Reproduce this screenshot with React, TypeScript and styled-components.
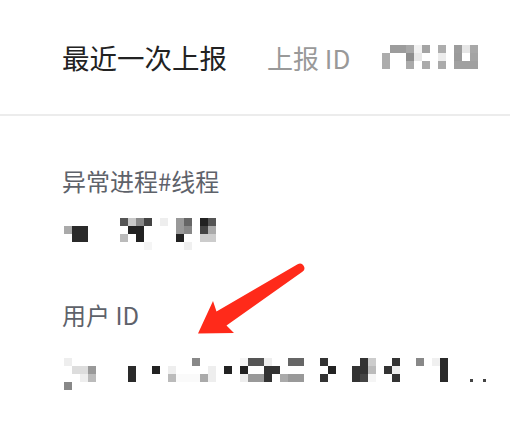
import styled, { createGlobalStyle } from 'styled-components';

const GlobalStyle = createGlobalStyle`
  html, body {
    margin: 0;
    padding: 0;
    background: #fff;
  }
  body {
    font-family: "Noto Sans CJK SC", "Noto Sans", sans-serif;
  }
`;

// Each mosaic is a list of rows; a row maps column index -> grey shade.
type Cells = Record<number, string>[];

const reportId: Cells = [
  { 1: '#9c9c9c', 2: '#9c9c9c', 3: '#a8a8a8', 4: '#f2f2f2', 5: '#a4a4a4', 7: '#adadad', 9: '#9c9c9c', 10: '#e6e6e6', 11: '#a8a8a8' },
  { 0: '#acacac', 3: '#8e8e8e', 4: '#e8e8e8', 7: '#ececec', 9: '#9a9a9a', 11: '#a4a4a4' },
  { 0: '#acacac', 3: '#aaaaaa', 5: '#aaaaaa', 7: '#aaaaaa', 9: '#a0a0a0', 10: '#a0a0a0', 11: '#a0a0a0' },
];

const threadId: Cells = [
  { 7: '#555', 8: '#c8c8c8', 9: '#888', 10: '#444', 12: '#eee', 14: '#999', 15: '#666', 17: '#222', 18: '#555' },
  { 0: '#aaa', 1: '#2a2a2a', 2: '#2a2a2a', 8: '#222', 9: '#222', 14: '#999', 15: '#888', 17: '#444', 18: '#aaa' },
  { 1: '#2a2a2a', 2: '#2a2a2a', 7: '#bbb', 9: '#222', 14: '#222', 17: '#ccc', 18: '#ccc' },
  { 10: '#f5f5f5', 15: '#f0f0f0' },
];

const userId: Cells = [
  { 0: '#eee', 16: '#888', 22: '#f5f5f5', 23: '#555', 24: '#555', 25: '#eee', 28: '#666', 29: '#666', 32: '#333', 37: '#333', 38: '#ccc', 41: '#333', 44: '#888', 46: '#f0f0f0', 47: '#2a2a2a' },
  { 1: '#ddd', 2: '#ddd', 3: '#999', 8: '#2a2a2a', 11: '#222', 13: '#eee', 18: '#eee', 20: '#222', 22: '#222', 25: '#333', 26: '#333', 33: '#222', 36: '#333', 37: '#333', 38: '#bbb', 40: '#333', 41: '#eee', 47: '#2a2a2a' },
  { 2: '#eee', 3: '#bbb', 8: '#2a2a2a', 13: '#bbb', 14: '#fafafa', 15: '#fafafa', 16: '#fafafa', 17: '#aaa', 18: '#eee', 22: '#eee', 23: '#999', 24: '#999', 25: '#333', 27: '#aaa', 28: '#999', 29: '#999', 32: '#333', 36: '#333', 37: '#444', 38: '#f5f5f5', 41: '#333', 47: '#2a2a2a' },
  { 0: '#888' },
];

const Page = styled.div`
  position: relative;
  width: 510px;
  height: 436px;
  overflow: hidden;
  background: #fff;
`;

const Header = styled.header`
  height: 116px;
  box-sizing: border-box;
  padding: 0 0 0 62px;
  display: flex;
  align-items: center;
  border-bottom: 2px solid #ececec;
`;

const Title = styled.h1`
  margin: 0 40px 0 0;
  font-size: 27.5px;
  font-weight: 400;
  line-height: 36px;
  color: #222;
`;

const IdLabel = styled.span`
  margin-right: 32px;
  font-size: 26px;
  line-height: 36px;
  color: #999;
  padding-top: 2px;
`;

const Body = styled.section`
  padding: 47px 0 0 62px;
  display: flex;
  flex-direction: column;
  gap: 47px;
`;

const Field = styled.div`
  display: flex;
  flex-direction: column;
`;

const Label = styled.div`
  font-size: 24px;
  line-height: 36px;
  color: #5e626a;
`;

const Grid = styled.div<{ $cols: number; $top: number; $left: number }>`
  display: grid;
  grid-template-columns: repeat(${(p) => p.$cols}, 8px);
  grid-auto-rows: 8px;
  margin-top: ${(p) => p.$top}px;
  margin-left: ${(p) => p.$left}px;
`;

const Cell = styled.span<{ $shade?: string }>`
  background: ${(p) => p.$shade ?? 'transparent'};
`;

const ValueRow = styled.div`
  position: relative;
  align-self: flex-start;
`;

const Dots = styled.span`
  position: absolute;
  left: calc(100% + 22px);
  top: 46px;
  display: flex;
  gap: 10px;

  &::before,
  &::after {
    content: '';
    width: 3px;
    height: 3px;
    background: #444;
  }
`;

const Arrow = styled.svg`
  position: absolute;
  left: 0;
  top: 0;
  pointer-events: none;
`;

function Mosaic({ rows, cols, top = 0, left = 2 }: { rows: Cells; cols: number; top?: number; left?: number }) {
  return (
    <Grid $cols={cols} $top={top} $left={left}>
      {rows.flatMap((row, r) =>
        Array.from({ length: cols }, (_, c) => <Cell key={`${r}-${c}`} $shade={row[c]} />)
      )}
    </Grid>
  );
}

export default function App() {
  return (
    <Page>
      <GlobalStyle />
      <Header>
        <Title>最近一次上报</Title>
        <IdLabel>上报 ID</IdLabel>
        <Mosaic rows={reportId} cols={12} left={0} top={0} />
      </Header>
      <Body>
        <Field>
          <Label>异常进程#线程</Label>
          <Mosaic rows={threadId} cols={19} top={19} />
        </Field>
        <Field>
          <Label>用户 ID</Label>
          <ValueRow>
            <Mosaic rows={userId} cols={48} top={25} />
            <Dots />
          </ValueRow>
        </Field>
      </Body>
      <Arrow width="510" height="436" viewBox="0 0 510 436">
        <path
          d="M297.6 264.2 L216.5 311.5 L213 301 L198 333.5 L234 333 L226.5 325.5 L302.4 271.8 A4.5 4.5 0 0 0 297.6 264.2 Z"
          fill="#ff2a1a"
        />
      </Arrow>
    </Page>
  );
}
